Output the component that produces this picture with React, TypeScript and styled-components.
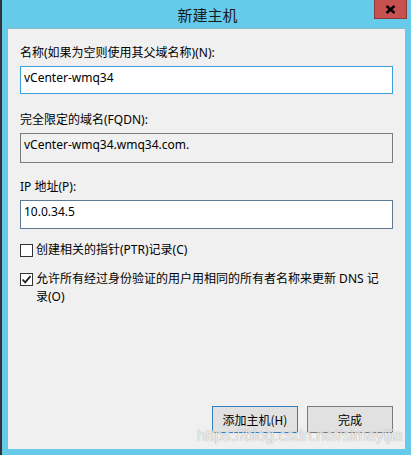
import React from "react";
import styled, { createGlobalStyle } from "styled-components";

const Global = createGlobalStyle`
  html, body { margin: 0; padding: 0; }
  body { width: 411px; height: 455px; overflow: hidden; }
`;

const Window = styled.div`
  position: relative;
  width: 411px;
  height: 455px;
  box-sizing: border-box;
  background: #66caea;
  border-left: 2px solid #2e3336;
  display: flex;
  flex-direction: column;
  font-family: "Noto Sans", "Noto Sans CJK SC", sans-serif;
  font-size: 12px;
  color: #000;
`;

const TitleBar = styled.div`
  height: 28px;
  display: grid;
  grid-template-columns: 1fr auto 1fr;
  align-items: start;
  border-bottom: 1px solid #8fb7c7;
  margin: 0 6px;
`;

const Title = styled.div`
  grid-column: 2;
  font-family: "Noto Sans CJK SC", sans-serif;
  font-size: 15px;
  line-height: 17px;
  padding-top: 6px;
  color: #1a1a1a;
  padding-left: 2px;
`;

const CloseBtn = styled.div`
  grid-column: 3;
  justify-self: end;
  margin-right: -2px;
  width: 33px;
  height: 19px;
  box-sizing: border-box;
  background: #c75050;
  border: 1px solid #8a3a38;
  border-top: none;
  display: flex;
  align-items: center;
  justify-content: center;
`;

const Body = styled.div`
  flex: 1;
  margin: 0 6px 6px 6px;
  background: #f0f0f0;
  padding: 16px 12px 16px 12px;
  display: flex;
  flex-direction: column;
`;

const Label = styled.div<{ $gap?: number }>`
  line-height: 16px;
  margin-top: ${(p) => p.$gap ?? 0}px;
  margin-bottom: 5px;
  white-space: nowrap;
`;

const Field = styled.div<{ $tone: "focus" | "ro" | "dark"; $h: number }>`
  height: ${(p) => p.$h}px;
  box-sizing: border-box;
  border: 1px solid
    ${(p) => (p.$tone === "focus" ? "#3c9fdd" : p.$tone === "ro" ? "#7a7a7a" : "#5d7a94")};
  background: ${(p) => (p.$tone === "ro" ? "#f0f0f0" : "#ffffff")};
  padding: 3px 3px 0 3px;
  line-height: 16px;
  color: #000;
`;

const CheckRow = styled.div<{ $gap: number }>`
  display: flex;
  align-items: flex-start;
  gap: 3px;
  margin-top: ${(p) => p.$gap}px;
`;

const Box = styled.div`
  width: 13px;
  height: 13px;
  box-sizing: border-box;
  border: 1px solid #333;
  background: #fff;
  flex: none;
  display: flex;
  align-items: center;
  justify-content: center;
`;

const CheckText = styled.div`
  line-height: 18px;
  margin-top: -3px;
`;

const Spacer = styled.div`
  flex: 1;
`;

const Buttons = styled.div`
  display: flex;
  justify-content: flex-end;
  gap: 9px;
`;

const Button = styled.div<{ $primary?: boolean }>`
  width: 86px;
  height: 27px;
  box-sizing: border-box;
  background: #e1e1e1;
  border: 1px solid ${(p) => (p.$primary ? "#2f7ec0" : "#7a7a7a")};
  display: flex;
  align-items: center;
  justify-content: center;
  font-family: "Noto Sans CJK SC", sans-serif;
  font-size: 12px;
`;

const Watermark = styled.div`
  position: absolute;
  left: 195px;
  top: 426px;
  font-family: "Liberation Sans", Arial, sans-serif;
  font-size: 16px;
  line-height: 20px;
  letter-spacing: -0.1px;
  color: rgba(255, 255, 255, 0.8);
  text-shadow: 0 0 1px rgba(0, 0, 0, 0.4);
  white-space: nowrap;
  pointer-events: none;
`;

export default function App() {
  return (
    <>
      <Global />
      <Window>
        <TitleBar>
          <Title>新建主机</Title>
          <CloseBtn>
            <svg width="11" height="9" viewBox="0 0 11 9">
              <path d="M1.5 1 L9.5 8 M9.5 1 L1.5 8" stroke="#000" strokeWidth="2.4" />
            </svg>
          </CloseBtn>
        </TitleBar>
        <Body>
          <Label>名称(如果为空则使用其父域名称)(N):</Label>
          <Field $tone="focus" $h={28}>vCenter-wmq34</Field>
          <Label $gap={18}>完全限定的域名(FQDN):</Label>
          <Field $tone="ro" $h={30}>vCenter-wmq34.wmq34.com.</Field>
          <Label $gap={16}>IP 地址(P):</Label>
          <Field $tone="dark" $h={29}>10.0.34.5</Field>
          <CheckRow $gap={15}>
            <Box />
            <CheckText>创建相关的指针(PTR)记录(C)</CheckText>
          </CheckRow>
          <CheckRow $gap={14}>
            <Box>
              <svg width="11" height="11" viewBox="0 0 11 11">
                <path d="M1.5 5.5 L4.2 8.3 L9.5 2.2" stroke="#222" strokeWidth="1.8" fill="none" />
              </svg>
            </Box>
            <CheckText>
              允许所有经过身份验证的用户用相同的所有者名称来更新 DNS 记<br />录(O)
            </CheckText>
          </CheckRow>
          <Spacer />
          <Buttons>
            <Button $primary>添加主机(H)</Button>
            <Button>完成</Button>
          </Buttons>
        </Body>
        <Watermark>https://blog.csdn.net/simayijia</Watermark>
      </Window>
    </>
  );
}
